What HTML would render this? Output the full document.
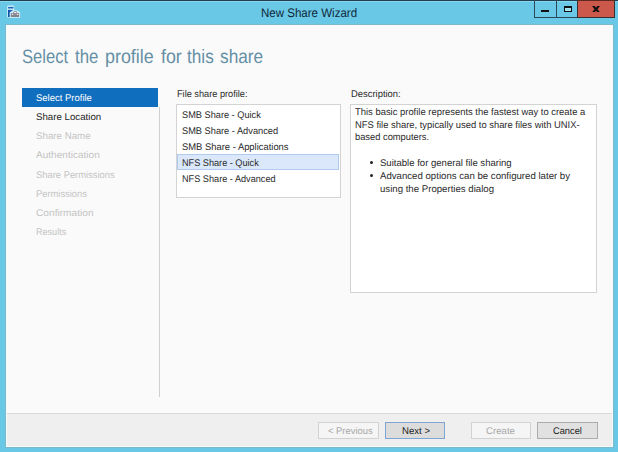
<!DOCTYPE html>
<html><head><meta charset="utf-8">
<style>
html,body{margin:0;padding:0;}
body{width:618px;height:452px;overflow:hidden;position:relative;background:#69c8e6;font-family:"Liberation Sans",sans-serif;text-rendering:geometricPrecision;}
.abs{position:absolute;}
.t{position:absolute;white-space:pre;line-height:12px;transform-origin:0 0;}
#topline{left:0;top:0;width:618px;height:1px;background:#1d3f50;}
#frame{left:5px;top:24px;width:609px;height:424px;border:1px solid #7fb8cb;background:#f2fdff;box-sizing:border-box;}
#content{left:7px;top:25px;width:605px;height:421px;background:#fafafa;}
#hl{left:0;top:1px;width:618px;height:1px;background:#8ad6ef;}
#footer{left:7px;top:413px;width:605px;height:33px;background:#efefef;border-top:1px solid #dadada;box-sizing:border-box;}
.hd{top:44px;font-size:19.4px;line-height:26px;color:#6690a5;white-space:pre;transform-origin:0 0;}
#selbar{left:22px;top:88px;width:136px;height:19px;background:#106ebe;}
#vsep{left:159px;top:107px;width:1px;height:290px;background:#d0d0d0;}
#list{left:176px;top:104px;width:165px;height:94px;background:#fff;border:1px solid #d3d3d3;box-sizing:border-box;}
#sel{left:177px;top:154px;width:162px;height:16px;background:#dbe8fb;border:1px solid #b0cbed;box-sizing:border-box;}
#desc{left:350px;top:104px;width:247px;height:189px;background:#fff;border:1px solid #d3d3d3;box-sizing:border-box;}
.btn{position:absolute;top:422px;height:17px;box-sizing:border-box;border:1px solid #acacac;background:#e1e1e1;}
.btn.dis{background:#f5f5f5;border-color:#d2d2d2;}
.btn.def{border-color:#7fa6d2;background:#dcdcdc;}
.bt{position:absolute;top:422.7px;height:17px;line-height:17px;font-size:9.7px;color:#222;white-space:pre;}
</style></head>
<body>
<div class="abs" id="topline"></div>
<div class="abs" id="hl"></div>
<svg class="abs" style="left:6px;top:4px" width="16" height="16" viewBox="0 0 16 16">
  <rect x="1.2" y="1.4" width="7" height="12.2" rx="1.2" fill="#d2f1fb"/>
  <rect x="2.1" y="2.9" width="5.4" height="1.6" fill="#1a63b5"/>
  <rect x="2.1" y="5.9" width="5" height="7" fill="#1a66bb"/>
  <rect x="2.1" y="5.9" width="1.3" height="7" fill="#0c4f9e"/>
  <path d="M3.7 13.7 L3.7 8.6 L6.9 6.2 L11.6 6.4 L14.1 8.6 L14.1 13.7 Z" fill="#d2f1fb"/>
  <rect x="4.8" y="9" width="8.3" height="3.8" rx="0.4" fill="#8e8e98"/>
  <rect x="4.8" y="11.3" width="8.3" height="1.5" fill="#7c7c88"/>
  <path d="M7.4 9.2 L7.9 7.7 L10.5 7.7 L11 9.2" fill="none" stroke="#8e8e98" stroke-width="1"/>
  <rect x="8.6" y="7.9" width="1.2" height="0.9" fill="#ffffff"/>
  <rect x="5.9" y="9.9" width="1.3" height="1" fill="#f4f4f8"/>
  <rect x="10.8" y="9.9" width="1.3" height="1" fill="#f4f4f8"/>
</svg>
<div class="t" style="left:261px;top:6.5px;font-size:12.4px;color:#10283a;transform:scaleX(0.93);">New Share Wizard</div>
<div class="abs" style="left:534px;top:0;width:44px;height:18px;border:1px solid #2a4a5a;border-top:none;box-sizing:border-box;"></div>
<div class="abs" style="left:556px;top:0;width:1px;height:18px;background:#2a4a5a;"></div>
<div class="abs" style="left:541px;top:10px;width:8px;height:2px;background:#111;"></div>
<div class="abs" style="left:563.5px;top:6px;width:8.5px;height:5.8px;border:1.6px solid #111;border-top-width:2.1px;background:#a6e2f4;box-sizing:border-box;"></div>
<div class="abs" style="left:577px;top:0;width:38px;height:18px;background:#cc584b;border:1px solid #3a3030;border-top:none;box-sizing:border-box;"></div>
<div class="abs" style="left:578px;top:0;width:36px;height:1px;background:#5e2a22;"></div>
<svg class="abs" style="left:592px;top:5.8px" width="8" height="6.3" viewBox="0 0 8 7" preserveAspectRatio="none">
  <path d="M0 0 L2.8 0 L4 2 L5.2 0 L8 0 L5.5 3.5 L8 7 L5.2 7 L4 5 L2.8 7 L0 7 L2.5 3.5 Z" fill="#111"/>
</svg>
<div class="abs" id="frame"></div>
<div class="abs" id="content"></div>
<div class="abs" id="footer"></div>
<div class="abs hd" style="left:22px;transform:scaleX(0.855);">Select</div>
<div class="abs hd" style="left:74.6px;transform:scaleX(0.868);">the</div>
<div class="abs hd" style="left:105px;transform:scaleX(0.923);">profile</div>
<div class="abs hd" style="left:160.6px;transform:scaleX(0.918);">for</div>
<div class="abs hd" style="left:186.8px;transform:scaleX(0.886);">this</div>
<div class="abs hd" style="left:219.6px;transform:scaleX(0.891);">share</div>
<div class="abs" id="selbar"></div>
<div class="abs" id="vsep"></div>
<div class="abs" id="list"></div>
<div class="abs" id="sel"></div>
<div class="abs" id="desc"></div>
<div class="abs" style="left:369.7px;top:160.6px;width:3.4px;height:3.4px;border-radius:50%;background:#222;"></div>
<div class="abs" style="left:369.7px;top:173.8px;width:3.4px;height:3.4px;border-radius:50%;background:#222;"></div>
<div class="t" style="left:36px;top:93.29605px;font-size:9.7px;color:#ffffff;transform:scaleX(0.979);">Select Profile</div>
<div class="t" style="left:36px;top:112.29605px;font-size:9.7px;color:#1e1e1e;">Share Location</div>
<div class="t" style="left:36px;top:131.29605px;font-size:9.7px;color:#c4c4c4;transform:scaleX(1.003);">Share Name</div>
<div class="t" style="left:36px;top:150.29605px;font-size:9.7px;color:#c4c4c4;transform:scaleX(1.039);">Authentication</div>
<div class="t" style="left:36px;top:170.29605px;font-size:9.7px;color:#c4c4c4;transform:scaleX(0.968);">Share Permissions</div>
<div class="t" style="left:36px;top:189.29605px;font-size:9.7px;color:#c4c4c4;transform:scaleX(0.966);">Permissions</div>
<div class="t" style="left:36px;top:208.29605px;font-size:9.7px;color:#c4c4c4;transform:scaleX(1.049);">Confirmation</div>
<div class="t" style="left:36px;top:227.29605px;font-size:9.7px;color:#c4c4c4;transform:scaleX(0.936);">Results</div>
<div class="t" style="left:177px;top:88.89604999999999px;font-size:9.7px;color:#2a2a2a;transform:scaleX(0.949);">File share profile:</div>
<div class="t" style="left:351px;top:88.89604999999999px;font-size:9.7px;color:#2a2a2a;transform:scaleX(0.971);">Description:</div>
<div class="t" style="left:182px;top:109.89604999999999px;font-size:9.7px;color:#2a2a2a;transform:scaleX(0.950);">SMB Share - Quick</div>
<div class="t" style="left:182px;top:125.89605px;font-size:9.7px;color:#2a2a2a;transform:scaleX(0.954);">SMB Share - Advanced</div>
<div class="t" style="left:182px;top:141.89605px;font-size:9.7px;color:#2a2a2a;transform:scaleX(0.970);">SMB Share - Applications</div>
<div class="t" style="left:182px;top:157.89605px;font-size:9.7px;color:#2a2a2a;transform:scaleX(0.944);">NFS Share - Quick</div>
<div class="t" style="left:182px;top:173.89605px;font-size:9.7px;color:#2a2a2a;transform:scaleX(0.945);">NFS Share - Advanced</div>
<div class="t" style="left:355px;top:106.89604999999999px;font-size:9.7px;color:#2a2a2a;transform:scaleX(0.972);">This basic profile represents the fastest way to create a</div>
<div class="t" style="left:355px;top:119.69604999999999px;font-size:9.7px;color:#2a2a2a;transform:scaleX(0.970);">NFS file share, typically used to share files with UNIX-</div>
<div class="t" style="left:355px;top:132.49605px;font-size:9.7px;color:#2a2a2a;transform:scaleX(0.962);">based computers.</div>
<div class="t" style="left:380px;top:158.09605px;font-size:9.7px;color:#2a2a2a;transform:scaleX(0.986);">Suitable for general file sharing</div>
<div class="t" style="left:380px;top:170.89605px;font-size:9.7px;color:#2a2a2a;transform:scaleX(0.994);">Advanced options can be configured later by</div>
<div class="t" style="left:380px;top:183.69605px;font-size:9.7px;color:#2a2a2a;transform:scaleX(0.994);">using the Properties dialog</div>
<div class="btn dis" style="left:318px;width:61px;"></div>
<div class="btn def" style="left:385px;width:60px;"></div>
<div class="btn dis" style="left:471px;width:60px;"></div>
<div class="btn" style="left:537px;width:61px;"></div>
<div class="bt" style="left:327.5px;color:#a8a8a8;transform:scaleX(0.969);transform-origin:0 0;">&lt; Previous</div>
<div class="bt" style="left:401.5px;transform:scaleX(0.992);transform-origin:0 0;">Next &gt;</div>
<div class="bt" style="left:485.8px;color:#a8a8a8;transform:scaleX(0.995);transform-origin:0 0;">Create</div>
<div class="bt" style="left:552.5px;transform:scaleX(0.957);transform-origin:0 0;">Cancel</div>
</body></html>
